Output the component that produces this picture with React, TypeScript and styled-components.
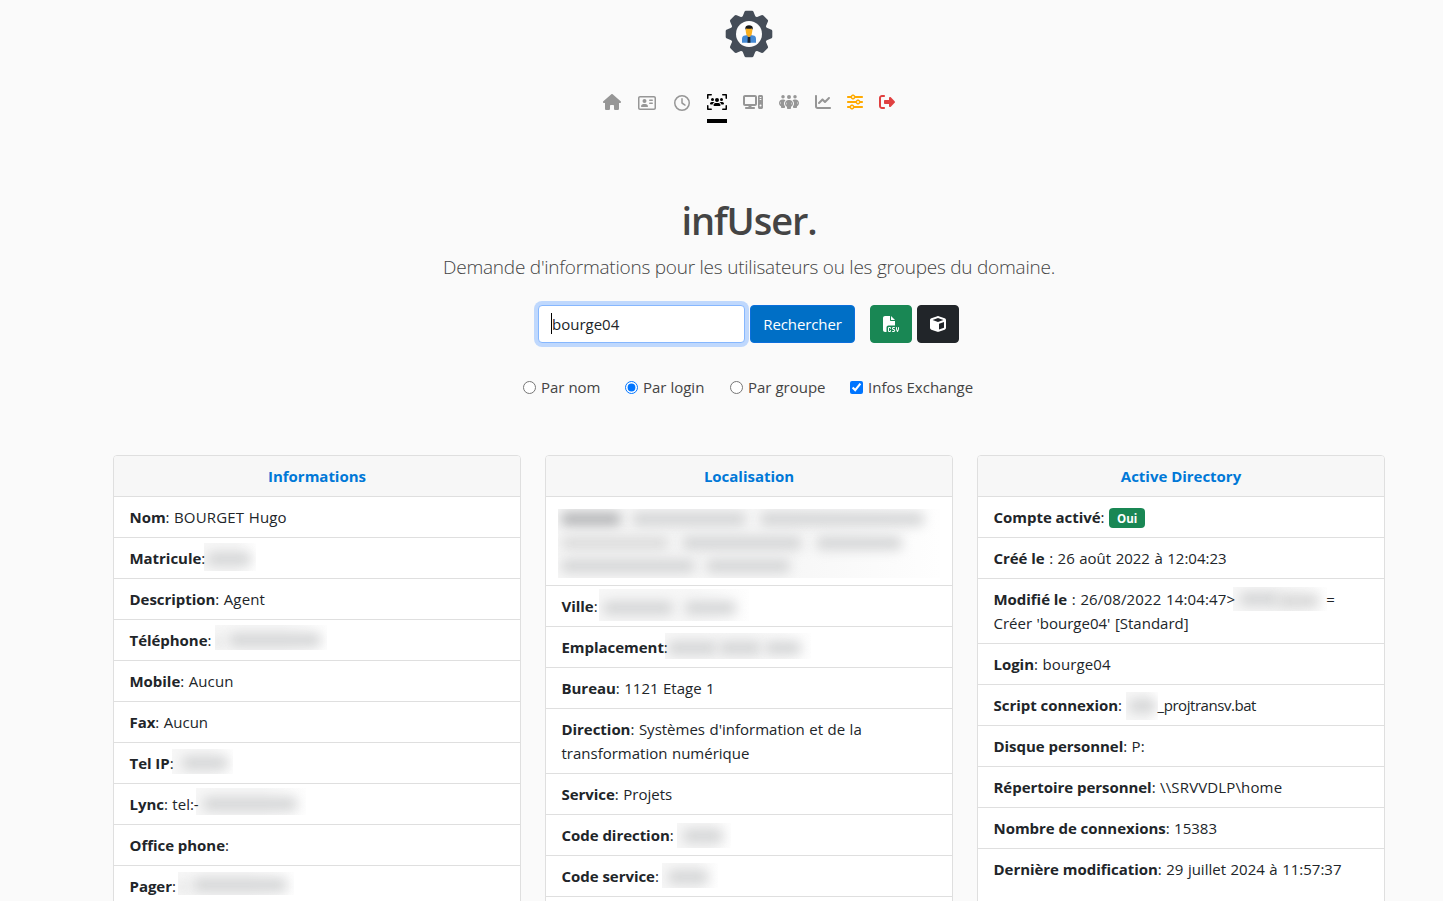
import React from 'react';
import styled, { createGlobalStyle, css } from 'styled-components';
import {
  FaHouse, FaRegAddressCard, FaRegClock, FaUsersViewfinder, FaComputer, FaPeopleGroup,
  FaChartLine, FaSliders, FaRightFromBracket, FaFileCsv, FaCube,
} from 'react-icons/fa6';

const GlobalStyle = createGlobalStyle`
  *, *::before, *::after { box-sizing: border-box; }
  html, body { margin: 0; overflow: hidden; }
  body {
    background: #fafafa;
    color: #212529;
    font: 400 15px/24px "Open Sans", "Noto Sans", sans-serif;
  }
`;

const Page = styled.div`
  width: 1498px;
  height: 901px;
  overflow: hidden;
  padding: 10px 113px 0;
  display: flex;
  flex-direction: column;
  align-items: center;

  > * { flex-shrink: 0; }
`;

const Logo = styled.svg`
  display: block;
  width: 48px;
  height: 48px;
`;

const Nav = styled.nav`
  display: flex;
  gap: 16px;
  margin-top: 36px;
  height: 29px;
`;

const NavItem = styled.a<{ $width: number; $icon?: number; $color?: string; $drop?: number; $active?: boolean }>`
  display: flex;
  justify-content: center;
  width: ${(p) => p.$width}px;
  padding-top: ${(p) => p.$drop ?? 0}px;
  color: ${(p) => p.$color ?? '#969696'};
  ${(p) => p.$active && css`border-bottom: 4px solid #000;`}

  svg {
    height: 16px;
    width: ${(p) => p.$icon ?? p.$width}px;
    flex: none;
  }
`;

const Title = styled.h1`
  margin: 73px 0 0;
  font-size: 38px;
  line-height: 48px;
  font-weight: 600;
  letter-spacing: -1.1px;
  color: #444;
`;

const Lead = styled.p`
  margin: 8px 0 0;
  font-size: 19px;
  line-height: 30px;
  font-weight: 300;
  letter-spacing: -0.23px;
  color: #444;
`;

const SearchBar = styled.form`
  display: flex;
  margin: 23px 1px 0 0;
  height: 38px;
`;

const Field = styled.div`
  position: relative;
  width: 207px;
  margin-right: 5px;
`;

const Input = styled.input`
  width: 100%;
  height: 38px;
  padding: 0 12px 0 13px;
  border: 1px solid #86b7fe;
  border-radius: 4px;
  box-shadow: 0 0 0 4px #bfd8fd;
  background: #fff;
  color: #212529;
  font: inherit;
  outline: 0;
`;

const Caret = styled.span`
  position: absolute;
  left: 13px;
  top: 8px;
  width: 1px;
  height: 21px;
  background: #000;
`;

const Button = styled.button<{ $bg: string; $edge?: string; $width: number; $gap?: number }>`
  display: flex;
  align-items: center;
  justify-content: center;
  width: ${(p) => p.$width}px;
  height: 38px;
  margin: 0 0 0 ${(p) => p.$gap ?? 0}px;
  padding: 0;
  border: 1px solid ${(p) => p.$edge ?? p.$bg};
  border-radius: 4px;
  background: ${(p) => p.$bg};
  color: #fff;
  font: inherit;
  letter-spacing: -0.1px;
`;

const Options = styled.div`
  display: flex;
  gap: 25px;
  margin-top: 32px;
  margin-right: 1px;
`;

const Option = styled.label<{ $width: number }>`
  display: flex;
  align-items: center;
  width: ${(p) => p.$width}px;
  white-space: nowrap;
  color: #444;

  input {
    width: 13px;
    height: 13px;
    margin: 0 5px 0 0;
    flex: none;
  }
`;

const Cards = styled.section`
  display: grid;
  grid-template-columns: repeat(3, 408px);
  gap: 24px;
  margin-top: 56px;
  align-items: start;
`;

const Card = styled.article`
  border: 1px solid #dfdfdf;
  border-radius: 4px;
  background: #fff;
  overflow: hidden;
  min-height: 500px;
`;

const CardHeader = styled.h2`
  margin: 0;
  padding: 8px 16px;
  height: 41px;
  border-bottom: 1px solid #dfdfdf;
  background: #f7f7f7;
  color: #0078d7;
  font-size: 15px;
  line-height: 24px;
  font-weight: 700;
  letter-spacing: -0.02px;
  text-align: center;
`;

const Row = styled.div<{ $lines?: number }>`
  position: relative;
  isolation: isolate;
  height: ${(p) => 17 + 24 * (p.$lines ?? 1)}px;
  padding: 8px 15.5px;
  border-bottom: 1px solid #dfdfdf;
  white-space: nowrap;
  word-spacing: 0.6px;

  &:last-child { border-bottom: 0; }
`;

const Label = styled.b`
  font-weight: 700;
  letter-spacing: -0.04px;
  word-spacing: 0;
`;

const Snug = styled.span`
  letter-spacing: -0.45px;
`;

const Loose = styled.span`
  letter-spacing: 0.14px;
`;

const Badge = styled.span`
  display: inline-block;
  height: 20px;
  padding: 0 8px;
  border-radius: 4px;
  background: #198754;
  color: #fff;
  font-size: 11.5px;
  line-height: 21px;
  font-weight: 700;
`;

/* Privacy mask standing in for a hidden value */
const Mask = styled.span<{ $x: number; $y: number; $w: number; $h: number }>`
  position: absolute;
  z-index: -1;
  left: ${(p) => p.$x}px;
  top: ${(p) => p.$y}px;
  width: ${(p) => p.$w}px;
  height: ${(p) => p.$h}px;
  overflow: hidden;
  background: linear-gradient(90deg, #f7f7f7 60%, #fefefe);
`;

const Smudge = styled.i<{ $x: number; $y: number; $w: number; $tone?: string }>`
  position: absolute;
  left: ${(p) => p.$x - 2}px;
  top: ${(p) => p.$y - 1}px;
  width: ${(p) => p.$w + 4}px;
  height: 14px;
  border-radius: 5px;
  background: ${(p) => p.$tone ?? '#d5d6d7'};
  filter: blur(6px);
`;

const Spacer = styled.span<{ $w: number }>`
  display: inline-block;
  width: ${(p) => p.$w}px;
`;

type Blot = [x: number, y: number, w: number, tone?: string];
type Box = [x: number, y: number, w: number, h: number];

function Redacted({ box, blots }: { box: Box; blots: Blot[] }) {
  return (
    <Mask $x={box[0]} $y={box[1]} $w={box[2]} $h={box[3]}>
      {blots.map(([x, y, w, tone]) => (
        <Smudge key={`${x}-${y}`} $x={x} $y={y} $w={w} $tone={tone} />
      ))}
    </Mask>
  );
}

function GearLogo() {
  return (
    <Logo viewBox="-24 -24 48 48">
      <g fill="#454d58">
        {[0, 45, 90, 135, 180, 225, 270, 315].map((a) => (
          <path
            key={a}
            transform={`rotate(${a})`}
            d="M-7 -16 L-4.6 -22 Q-4.2 -23.3 -3 -23.3 H3 Q4.2 -23.3 4.6 -22 L7 -16 Z"
          />
        ))}
        <circle r="18.6" />
      </g>
      <circle r="13" fill="#fdfdfd" />
      <path d="M-7 8.8 V5 Q-7 2 -4 1.6 L-1.5 1 H1.8 L4.2 1.6 Q7 2 7 5 V8.8 Z" fill="#4489d3" />
      <path d="M-2.6 1 L0 3.4 L2.6 1 V-1 H-2.6 Z" fill="#f2a71f" />
      <path d="M-1.3 3 H1.3 L1.5 8.8 H-1.5 Z" fill="#17222f" />
      <ellipse cy="-3.4" rx="3.3" ry="4.3" fill="#f9b01f" />
      <path d="M-3.7 -4 V-6 Q-3.4 -8.8 0 -8.8 Q3.6 -8.8 3.8 -6 V-4 L3 -5.6 Q0 -4.9 -3 -5.6 Z" fill="#161616" />
    </Logo>
  );
}

export default function App() {
  return (
    <Page>
      <GlobalStyle />
      <GearLogo />
      <Nav>
        <NavItem $width={18}><FaHouse /></NavItem>
        <NavItem $width={20} $icon={18} $drop={1}><FaRegAddressCard /></NavItem>
        <NavItem $width={18} $icon={16} $drop={1}><FaRegClock /></NavItem>
        <NavItem $width={20} $color="#000" $active><FaUsersViewfinder /></NavItem>
        <NavItem $width={20}><FaComputer /></NavItem>
        <NavItem $width={20}><FaPeopleGroup /></NavItem>
        <NavItem $width={16}><FaChartLine /></NavItem>
        <NavItem $width={16} $color="#ffaa00"><FaSliders /></NavItem>
        <NavItem $width={16} $color="#e04040"><FaRightFromBracket /></NavItem>
      </Nav>

      <Title>infUser.</Title>
      <Lead>Demande d'informations pour les utilisateurs ou les groupes du domaine.</Lead>

      <SearchBar>
        <Field>
          <Input defaultValue="bourge04" />
          <Caret />
        </Field>
        <Button type="button" $bg="#006fc6" $edge="#0b6fdc" $width={105}>Rechercher</Button>
        <Button type="button" $bg="#198754" $width={42} $gap={15}><FaFileCsv size={16} /></Button>
        <Button type="button" $bg="#212529" $width={42} $gap={5}><FaCube size={16} /></Button>
      </SearchBar>

      <Options>
        <Option $width={77}><input type="radio" name="mode" />Par nom</Option>
        <Option $width={80}><input type="radio" name="mode" defaultChecked />Par login</Option>
        <Option $width={95}><input type="radio" name="mode" />Par groupe</Option>
        <Option $width={124}><input type="checkbox" defaultChecked />Infos Exchange</Option>
      </Options>

      <Cards>
        <Card>
          <CardHeader>Informations</CardHeader>
          <Row><Label>Nom</Label>: <Loose>BOURGET Hugo</Loose></Row>
          <Row>
            <Label>Matricule</Label>:
            <Redacted box={[90, 5, 52, 28]} blots={[[5, 10, 40]]} />
          </Row>
          <Row><Label>Description</Label>: <Loose>Agent</Loose></Row>
          <Row>
            <Label>Téléphone</Label>:
            <Redacted box={[101, 5, 112, 25]} blots={[[0, 11, 6, '#e4e4e4'], [16, 9, 88]]} />
          </Row>
          <Row><Label>Mobile</Label>: <Loose>Aucun</Loose></Row>
          <Row><Label>Fax</Label>: Aucun</Row>
          <Row>
            <Label>Tel IP</Label>:
            <Redacted box={[58, 6, 61, 25]} blots={[[12, 8, 42]]} />
          </Row>
          <Row>
            <Label>Lync</Label>: tel:-
            <Redacted box={[82, 4, 110, 27]} blots={[[9, 10, 90]]} />
          </Row>
          <Row><Label>Office phone</Label>:</Row>
          <Row>
            <Label>Pager</Label>:
            <Redacted box={[64, 6, 116, 23]} blots={[[2, 9, 5, '#e4e4e4'], [17, 7, 90]]} />
          </Row>
        </Card>

        <Card>
          <CardHeader>Localisation</CardHeader>
          <Row $lines={3}>
            <Redacted
              box={[12, 12, 382, 69]}
              blots={[
                [5, 4, 56, '#b6b7b9'], [76, 4, 110], [204, 4, 160],
                [5, 28, 104, '#dcdcdc'], [126, 28, 116], [260, 28, 82],
                [5, 51, 130], [150, 51, 80],
              ]}
            />
          </Row>
          <Row>
            <Label>Ville</Label>:
            <Redacted box={[53, 3, 150, 32]} blots={[[6, 13, 66], [88, 13, 47]]} />
          </Row>
          <Row>
            <Label>Emplacement</Label>:
            <Redacted box={[119, 6, 146, 26]} blots={[[5, 9, 45], [56, 9, 38], [102, 9, 32]]} />
          </Row>
          <Row><Label>Bureau</Label>: 1121 Etage 1</Row>
          <Row $lines={2}>
            <Label>Direction</Label>: Systèmes d'information et de la
            <br />
            <span>transformation numérique</span>
          </Row>
          <Row><Label>Service</Label>: Projets</Row>
          <Row>
            <Label>Code direction</Label>:
            <Redacted box={[131, 8, 54, 25]} blots={[[8, 7, 36]]} />
          </Row>
          <Row>
            <Label>Code service</Label>:
            <Redacted box={[116, 7, 56, 25]} blots={[[8, 8, 36]]} />
          </Row>
          <Row />
        </Card>

        <Card>
          <CardHeader>Active Directory</CardHeader>
          <Row><Label>Compte activé</Label>: <Badge>Oui</Badge></Row>
          <Row><Label>Créé le</Label> : 26 août 2022 à 12:04:23</Row>
          <Row $lines={2}>
            <Label>Modifié le</Label> <Loose>: 26/08/2022 14:04:47&gt;</Loose><Spacer $w={91} />=
            <br />
            Créer 'bourge04' [Standard]
            <Redacted box={[255, 8, 94, 24]} blots={[[9, 6, 35], [46, 8, 38, '#d8d8d8']]} />
          </Row>
          <Row><Label>Login</Label>: <Loose>bourge04</Loose></Row>
          <Row>
            <Label>Script connexion</Label>: <Spacer $w={31} /><Snug>_projtransv.bat</Snug>
            <Redacted box={[148, 7, 32, 28]} blots={[[5, 8, 23]]} />
          </Row>
          <Row><Label>Disque personnel</Label>: P:</Row>
          <Row><Label>Répertoire personnel</Label>: <Loose>\\SRVVDLP\home</Loose></Row>
          <Row><Label>Nombre de connexions</Label>: 15383</Row>
          <Row><Label>Dernière modification</Label>: 29 juillet 2024 à 11:57:37</Row>
        </Card>
      </Cards>
    </Page>
  );
}
